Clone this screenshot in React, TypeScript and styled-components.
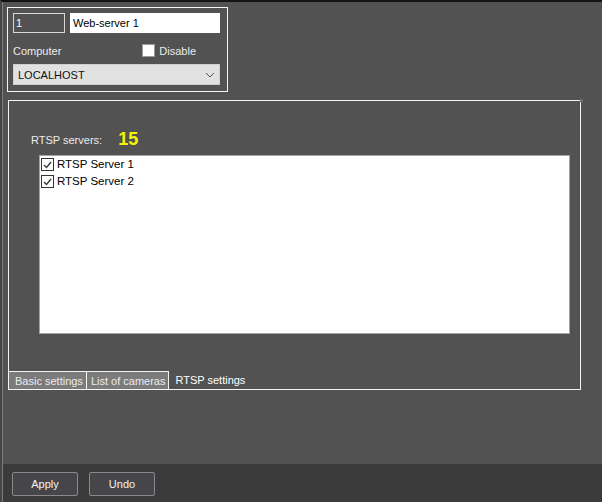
import styled, { createGlobalStyle } from 'styled-components';

const servers = ['RTSP Server 1', 'RTSP Server 2'];
const tabs = ['Basic settings', 'List of cameras', 'RTSP settings'];
const activeTab = 'RTSP settings';

const GlobalStyle = createGlobalStyle`
    html, body {
        margin: 0;
        padding: 0;
        background: #525252;
    }
    body {
        font-family: 'Liberation Sans', Arial, sans-serif;
        font-size: 11px;
    }
`;

function CheckMark() {
    return (
        <svg width="9" height="8" viewBox="0 0 9 8">
            <path d="M1 4 L3.5 6.5 L8 1" fill="none" stroke="#333" strokeWidth="1.3" />
        </svg>
    );
}

function Chevron() {
    return (
        <svg width="10" height="6" viewBox="0 0 10 6">
            <path d="M1 1 L5 5 L9 1" fill="none" stroke="#555" strokeWidth="1" />
        </svg>
    );
}

export default function App() {
    return (
        <Page>
            <GlobalStyle />
            <Frame>
                <Workspace>
                    <HeaderBox>
                        <Row>
                            <IdInput defaultValue="1" />
                            <NameInput defaultValue="Web-server 1" />
                        </Row>
                        <Row $between>
                            <Label>Computer</Label>
                            <CheckLabel>
                                <EmptyBox />
                                Disable
                            </CheckLabel>
                        </Row>
                        <Select>
                            <span>LOCALHOST</span>
                            <Chevron />
                        </Select>
                    </HeaderBox>
                    <SettingsBox>
                        <Corner />
                        <Counter>
                            <Label>RTSP servers:</Label>
                            <Count>15</Count>
                        </Counter>
                        <ServerList>
                            {servers.map((name) => (
                                <ServerRow key={name}>
                                    <CheckBox>
                                        <CheckMark />
                                    </CheckBox>
                                    {name}
                                </ServerRow>
                            ))}
                        </ServerList>
                        <TabBar>
                            {tabs.map((tab) => (
                                <Tab key={tab} $active={tab === activeTab}>
                                    {tab}
                                </Tab>
                            ))}
                        </TabBar>
                    </SettingsBox>
                </Workspace>
                <Footer>
                    <Button>Apply</Button>
                    <Button>Undo</Button>
                </Footer>
            </Frame>
        </Page>
    );
}

const Page = styled.div`
    width: 602px;
    height: 502px;
    box-sizing: border-box;
    border-top: 2px solid #141414;
    border-left: 2px solid #454545;
    background: #525252;
    overflow: hidden;
`;
const Frame = styled.div`
    height: 100%;
    border-left: 1px solid #7c7c7c;
    display: flex;
    flex-direction: column;
`;
const Workspace = styled.div`
    flex: 1;
    padding: 5px 0 0 4px;
    display: flex;
    flex-direction: column;
`;
const HeaderBox = styled.div`
    width: 221px;
    height: 85px;
    box-sizing: border-box;
    border: 1px solid #f4f4f4;
    padding: 5px 7px 0 5px;
    display: flex;
    flex-direction: column;
`;
const Row = styled.div<{ $between?: boolean }>`
    display: flex;
    align-items: center;
    gap: 5px;
    justify-content: ${(p) => (p.$between ? 'space-between' : 'flex-start')};
    height: ${(p) => (p.$between ? '27px' : '20px')};
    margin-top: ${(p) => (p.$between ? '4px' : '0')};
    padding-right: ${(p) => (p.$between ? '24px' : '0')};
`;
const IdInput = styled.input`
    width: 52px;
    height: 20px;
    box-sizing: border-box;
    border: 1px solid #d8d8d8;
    background: #525252;
    color: #fff;
    font: 11px 'Liberation Sans', Arial, sans-serif;
    padding: 0 2px;
    outline: none;
`;
const NameInput = styled.input`
    width: 150px;
    height: 20px;
    box-sizing: border-box;
    border: 1px solid #ffffff;
    background: #ffffff;
    color: #000;
    font: 11px 'Liberation Sans', Arial, sans-serif;
    padding: 0 2px;
    outline: none;
`;
const Label = styled.span`
    color: #ececec;
    font-size: 11px;
`;
const CheckLabel = styled.label`
    display: flex;
    align-items: center;
    gap: 4px;
    color: #ececec;
`;
const EmptyBox = styled.span`
    width: 13px;
    height: 13px;
    box-sizing: border-box;
    background: #fff;
    border: 1px solid #9a9a9a;
`;
const Select = styled.div`
    width: 207px;
    height: 21px;
    box-sizing: border-box;
    background: #e1e1e1;
    border: 1px solid #cfcfcf;
    display: flex;
    align-items: center;
    justify-content: space-between;
    padding: 0 4px 0 4px;
    color: #111;
`;
const SettingsBox = styled.div`
    position: relative;
    margin: 8px 0 0 1px;
    width: 573px;
    height: 290px;
    box-sizing: border-box;
    border: 1px solid #f4f4f4;
    display: flex;
    flex-direction: column;
`;
const Corner = styled.span`
    position: absolute;
    top: -2px;
    right: -3px;
    width: 3px;
    height: 3px;
    background: #6c6c6c;
`;
const Counter = styled.div`
    display: flex;
    align-items: center;
    gap: 16px;
    margin: 29px 0 0 22px;
    height: 19px;
`;
const Count = styled.span`
    color: #f5f500;
    font-size: 18px;
    font-weight: bold;
`;
const ServerList = styled.div`
    margin: 6px 0 0 30px;
    width: 531px;
    height: 179px;
    box-sizing: border-box;
    background: #fff;
    border: 1px solid #a4a4a4;
    padding: 0 1px;
`;
const ServerRow = styled.div`
    display: flex;
    align-items: center;
    gap: 3px;
    height: 17px;
    color: #000;
    font-size: 11.5px;
    line-height: 13px;
`;
const CheckBox = styled.span`
    width: 13px;
    height: 13px;
    box-sizing: border-box;
    border: 1px solid #333;
    display: flex;
    align-items: center;
    justify-content: center;
    background: #fff;
`;
const TabBar = styled.div`
    margin-top: auto;
    display: flex;
    height: 18px;
`;
const Tab = styled.div<{ $active: boolean }>`
    height: 18px;
    box-sizing: border-box;
    display: flex;
    align-items: center;
    padding: 0 3px 0 4px;
    color: ${(p) => (p.$active ? '#ffffff' : '#ececec')};
    background: ${(p) => (p.$active ? 'transparent' : '#7b7b7b')};
    border: ${(p) => (p.$active ? 'none' : '1px solid #f4f4f4')};
    border-bottom: none;
    margin-right: -1px;
    &:first-child {
        border-left: none;
        padding-left: 6px;
    }
    &:last-child {
        padding-left: 7px;
    }
`;
const Footer = styled.div`
    height: 38px;
    background: #3b3b3b;
    display: flex;
    align-items: center;
    gap: 11px;
    padding: 2px 0 0 9px;
    box-sizing: border-box;
`;
const Button = styled.button`
    width: 66px;
    height: 24px;
    box-sizing: border-box;
    background: #46464a;
    border: 1px solid #8a8a8a;
    border-radius: 2px;
    color: #f2f2f2;
    font: 11px 'Liberation Sans', Arial, sans-serif;
`;
